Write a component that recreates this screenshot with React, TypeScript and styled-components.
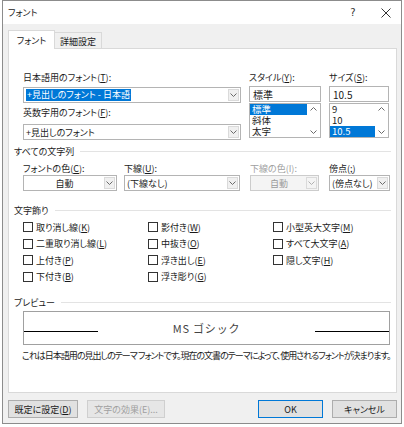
import React from "react";
import styled, { createGlobalStyle } from "styled-components";

const FONT = `"Noto Sans CJK JP", "Noto Sans", sans-serif`;

const Global = createGlobalStyle`
  html, body { margin: 0; padding: 0; background: #ffffff; }
  body {
    font-family: ${FONT};
    font-size: 9px;
    color: #1a1a1a;
    font-feature-settings: "palt";
    -webkit-font-smoothing: antialiased;
  }
  * { box-sizing: border-box; }
  u { text-underline-offset: 1px; }
`;

const Window = styled.div`
  margin-left: 2px;
  width: 400px;
  height: 424px;
  border: 1px solid #8c8c8c;
  display: flex;
  flex-direction: column;
  background: #f0f0f0;
`;

const TitleBar = styled.div`
  height: 23px;
  background: #ffffff;
  display: flex;
  align-items: center;
  padding-left: 5px;
  font-size: 9px;
`;

const TitleText = styled.div`
  flex: 1;
`;

const CaptionButton = styled.div<{ $mr?: number }>`
  width: 30px;
  height: 23px;
  display: flex;
  align-items: center;
  justify-content: center;
  margin-right: ${(p) => p.$mr ?? 0}px;
  color: #333;
  font-size: 10px;
  font-family: "DejaVu Sans", sans-serif;
`;

const Body = styled.div`
  flex: 1;
  display: flex;
  flex-direction: column;
  padding: 6px 4px 5px 5px;
`;

const TabStrip = styled.div`
  height: 18px;
  display: flex;
  align-items: flex-end;
  position: relative;
  z-index: 1;
`;

const Tab = styled.div<{ $active?: boolean }>`
  width: 47px;
  height: ${(p) => (p.$active ? 19 : 16)}px;
  margin-bottom: ${(p) => (p.$active ? -1 : 0)}px;
  background: ${(p) => (p.$active ? "#ffffff" : "#f0f0f0")};
  border: 1px solid #d9d9d9;
  border-bottom: none;
  ${(p) => (p.$active ? "" : "border-left: none;")}
  display: flex;
  align-items: center;
  justify-content: center;
  padding-top: ${(p) => (p.$active ? 0 : 1)}px;
`;

const Panel = styled.div`
  height: 345px;
  background: #ffffff;
  border: 1px solid #d9d9d9;
  padding: 23px 5px 0 5px;
  display: flex;
  flex-direction: column;
`;

const Indent = styled.div`
  padding-left: 9px;
`;

const TopGrid = styled(Indent)`
  display: grid;
  grid-template-columns: 218px 72px 60px;
  column-gap: 8px;
  align-items: start;
`;

const Column = styled.div`
  display: flex;
  flex-direction: column;
`;

const Label = styled.div<{ $mt?: number; $disabled?: boolean }>`
  height: 12px;
  line-height: 12px;
  white-space: nowrap;
  margin-top: ${(p) => p.$mt ?? 0}px;
  color: ${(p) => (p.$disabled ? "#a0a0a0" : "inherit")};
`;

const ComboBox = styled.div<{ $mt?: number; $disabled?: boolean }>`
  height: 16px;
  margin-top: ${(p) => p.$mt ?? 0}px;
  border: 1px solid ${(p) => (p.$disabled ? "#cccccc" : "#b4b4b4")};
  background: ${(p) => (p.$disabled ? "#f4f4f4" : "#ffffff")};
  display: flex;
  align-items: stretch;
`;

const ComboText = styled.div<{ $center?: boolean; $disabled?: boolean }>`
  flex: 1;
  display: flex;
  align-items: center;
  justify-content: ${(p) => (p.$center ? "center" : "flex-start")};
  padding-left: 2px;
  white-space: nowrap;
  overflow: hidden;
  color: ${(p) => (p.$disabled ? "#9a9a9a" : "inherit")};
`;

const Selected = styled.span`
  background: #0078d7;
  color: #ffffff;
  padding: 0 1px;
  line-height: 12px;
`;

const DropButton = styled.div<{ $disabled?: boolean }>`
  width: 11px;
  margin: 1px;
  border: 1px solid #dadada;
  background: ${(p) => (p.$disabled ? "#f4f4f4" : "#f0f0f0")};
  display: flex;
  align-items: center;
  justify-content: center;
`;

const TextBox = styled.div<{ $mt?: number }>`
  height: 16px;
  margin-top: ${(p) => p.$mt ?? 0}px;
  border: 1px solid #b4b4b4;
  background: #ffffff;
  display: flex;
  align-items: center;
  padding-left: 3px;
  font-size: 10px;
`;

const ListBox = styled.div`
  height: 35px;
  margin-top: 1px;
  border: 1px solid #b4b4b4;
  background: #ffffff;
  display: flex;
`;

const ListItems = styled.div`
  flex: 1;
  display: flex;
  flex-direction: column;
`;

const ListItem = styled.div<{ $selected?: boolean }>`
  height: 11px;
  line-height: 11px;
  padding-left: 2px;
  font-size: 9.5px;
  background: ${(p) => (p.$selected ? "#0078d7" : "transparent")};
  color: ${(p) => (p.$selected ? "#ffffff" : "inherit")};
`;

const ScrollBar = styled.div`
  width: 13px;
  display: flex;
  flex-direction: column;
  justify-content: space-between;
  align-items: center;
  padding: 3px 0;
  background: #ffffff;
`;

const SectionHeader = styled.div<{ $mt: number }>`
  height: 12px;
  margin-top: ${(p) => p.$mt}px;
  display: flex;
  align-items: center;
  gap: 6px;
  white-space: nowrap;
  &::after {
    content: "";
    flex: 1;
    height: 1px;
    background: #e3e3e3;
  }
`;

const FieldRow = styled(Indent)`
  margin-top: 6px;
  display: grid;
  grid-template-columns: 101px 126px 79px 61px;
`;

const Field = styled.div<{ $w: number }>`
  width: ${(p) => p.$w}px;
  display: flex;
  flex-direction: column;
`;

const CheckGrid = styled(Indent)`
  margin-top: 3px;
  display: grid;
  grid-template-columns: 125px 125px 1fr;
  grid-auto-rows: 16.5px;
`;

const CheckItem = styled.label`
  display: flex;
  align-items: center;
  gap: 3px;
  white-space: nowrap;
`;

const Box = styled.span`
  width: 10px;
  height: 10px;
  border: 1px solid #333333;
  background: #ffffff;
  flex: none;
`;

const PreviewBox = styled.div`
  margin: 3px 0 0 9px;
  width: 367px;
  height: 34px;
  border: 1px solid #a0a0a0;
  display: flex;
  align-items: flex-end;
  justify-content: space-between;
  padding-bottom: 12px;
`;

const PreviewLine = styled.div`
  width: 74px;
  height: 1px;
  background: #000000;
`;

const PreviewText = styled.div`
  font-size: 11px;
  line-height: 12px;
  margin-bottom: -2px;
  color: #444444;
  letter-spacing: 0.8px;
  font-feature-settings: normal;
`;

const Description = styled(Indent)`
  margin-top: 5px;
  padding-left: 8px;
  line-height: 12px;
  white-space: nowrap;
  letter-spacing: -1px;
`;

const ButtonRow = styled.div`
  margin-top: 7px;
  height: 18px;
  display: flex;
  gap: 9px;
`;

const Spacer = styled.div`
  flex: 1;
`;

const Button = styled.div<{ $w: number; $variant?: "default" | "disabled" }>`
  width: ${(p) => p.$w}px;
  height: 18px;
  background: ${(p) => (p.$variant === "disabled" ? "#e6e6e6" : "#e1e1e1")};
  border: 1px solid
    ${(p) =>
      p.$variant === "default" ? "#0078d7" : p.$variant === "disabled" ? "#cfcfcf" : "#adadad"};
  color: ${(p) => (p.$variant === "disabled" ? "#a0a0a0" : "#1a1a1a")};
  display: flex;
  align-items: center;
  justify-content: center;
  white-space: nowrap;
`;

const Chevron = ({ up = false, color = "#6a6a6a" }: { up?: boolean; color?: string }) => (
  <svg width="7" height="4" viewBox="0 0 7 4">
    <polyline
      points={up ? "0.5,3.5 3.5,0.5 6.5,3.5" : "0.5,0.5 3.5,3.5 6.5,0.5"}
      fill="none"
      stroke={color}
      strokeWidth="1"
    />
  </svg>
);

const Combo = ({
  children,
  mt,
  center,
  disabled,
}: {
  children: React.ReactNode;
  mt?: number;
  center?: boolean;
  disabled?: boolean;
}) => (
  <ComboBox $mt={mt} $disabled={disabled}>
    <ComboText $center={center} $disabled={disabled}>
      {children}
    </ComboText>
    <DropButton $disabled={disabled}>
      <Chevron color={disabled ? "#b0b0b0" : "#6a6a6a"} />
    </DropButton>
  </ComboBox>
);

const Check = ({ text, k }: { text: string; k: string }) => (
  <CheckItem>
    <Box />
    <span>
      {text}(<u>{k}</u>)
    </span>
  </CheckItem>
);

export default function App() {
  return (
    <>
      <Global />
      <Window>
        <TitleBar>
          <TitleText>フォント</TitleText>
          <CaptionButton $mr={3}>?</CaptionButton>
          <CaptionButton>
            <svg width="10" height="10" viewBox="0 0 10 10">
              <path d="M0.5 0.5 L9.5 9.5 M9.5 0.5 L0.5 9.5" stroke="#333" strokeWidth="1" />
            </svg>
          </CaptionButton>
        </TitleBar>
        <Body>
          <TabStrip>
            <Tab $active>フォント</Tab>
            <Tab>詳細設定</Tab>
          </TabStrip>
          <Panel>
            <TopGrid>
              <Column>
                <Label>
                  日本語用のフォント(<u>T</u>):
                </Label>
                <Combo mt={3}>
                  <Selected>+見出しのフォント - 日本語</Selected>
                </Combo>
                <Label $mt={4}>
                  英数字用のフォント(<u>F</u>):
                </Label>
                <Combo mt={5}>+見出しのフォント</Combo>
              </Column>
              <Column>
                <Label>
                  スタイル(<u>Y</u>):
                </Label>
                <TextBox $mt={2}>標準</TextBox>
                <ListBox>
                  <ListItems>
                    <ListItem $selected>標準</ListItem>
                    <ListItem>斜体</ListItem>
                    <ListItem>太字</ListItem>
                  </ListItems>
                  <ScrollBar>
                    <Chevron up />
                    <Chevron />
                  </ScrollBar>
                </ListBox>
              </Column>
              <Column>
                <Label>
                  サイズ(<u>S</u>):
                </Label>
                <TextBox $mt={2}>10.5</TextBox>
                <ListBox>
                  <ListItems>
                    <ListItem>9</ListItem>
                    <ListItem>10</ListItem>
                    <ListItem $selected>10.5</ListItem>
                  </ListItems>
                  <ScrollBar>
                    <Chevron up />
                    <Chevron />
                  </ScrollBar>
                </ListBox>
              </Column>
            </TopGrid>

            <SectionHeader $mt={5}>すべての文字列</SectionHeader>
            <FieldRow>
              <Field $w={94}>
                <Label>
                  フォントの色(<u>C</u>):
                </Label>
                <Combo center>自動</Combo>
              </Field>
              <Field $w={116}>
                <Label>
                  下線(<u>U</u>):
                </Label>
                <Combo>(下線なし)</Combo>
              </Field>
              <Field $w={69}>
                <Label $disabled>下線の色(I):</Label>
                <Combo center disabled>
                  自動
                </Combo>
              </Field>
              <Field $w={61}>
                <Label>
                  傍点(<u>;</u>)
                </Label>
                <Combo>(傍点なし)</Combo>
              </Field>
            </FieldRow>

            <SectionHeader $mt={13}>文字飾り</SectionHeader>
            <CheckGrid>
              <Check text="取り消し線" k="K" />
              <Check text="影付き" k="W" />
              <Check text="小型英大文字" k="M" />
              <Check text="二重取り消し線" k="L" />
              <Check text="中抜き" k="O" />
              <Check text="すべて大文字" k="A" />
              <Check text="上付き" k="P" />
              <Check text="浮き出し" k="E" />
              <Check text="隠し文字" k="H" />
              <Check text="下付き" k="B" />
              <Check text="浮き彫り" k="G" />
            </CheckGrid>

            <SectionHeader $mt={11}>プレビュー</SectionHeader>
            <PreviewBox>
              <PreviewLine />
              <PreviewText>MS ゴシック</PreviewText>
              <PreviewLine />
            </PreviewBox>
            <Description>
              これは日本語用の見出しのテーマ フォントです。現在の文書のテーマによって、使用されるフォントが決まります。
            </Description>
          </Panel>
          <ButtonRow>
            <Button $w={70}>
              既定に設定(<u>D</u>)
            </Button>
            <Button $w={78} $variant="disabled">
              文字の効果(E)...
            </Button>
            <Spacer />
            <Button $w={65} $variant="default">
              OK
            </Button>
            <Button $w={65}>キャンセル</Button>
          </ButtonRow>
        </Body>
      </Window>
    </>
  );
}
